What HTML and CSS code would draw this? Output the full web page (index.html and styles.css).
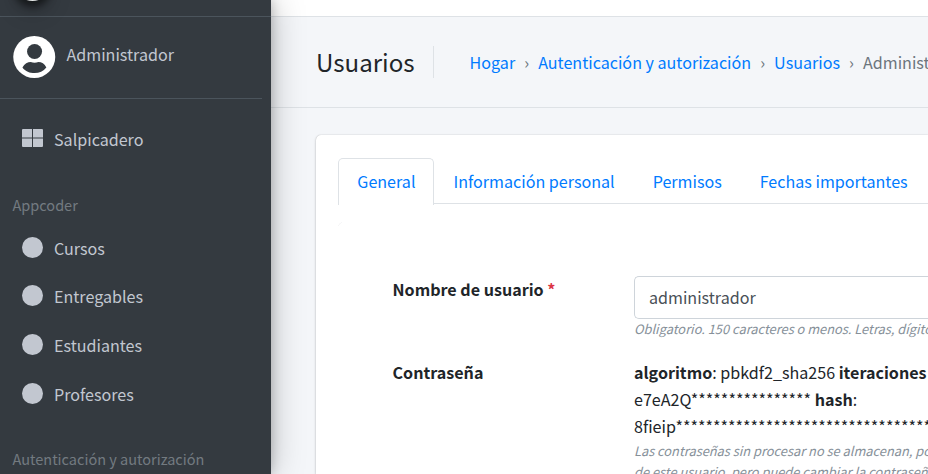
FILE: index.html
```html
<!DOCTYPE html>
<html lang="es">
<head>
<meta charset="utf-8">
<title>Usuarios</title>
<link rel="stylesheet" href="styles.css">
</head>
<body>
<div class="wrapper">
  <aside class="sidebar">
    <div class="brand"><span class="brand-logo"></span></div>
    <div class="user-panel">
      <svg class="avatar" viewBox="0 0 42 42"><circle cx="21" cy="21" r="21" fill="#fff"/><circle cx="21.3" cy="15.5" r="7.5" fill="#343a40"/><path d="M9.200 31.400c2-3.600 5.300-5.400 8.300-5.400 2.500 1 5.200 1 7.600 0 3.300 0 6.300 1.800 8 5.400-3 4-7 5.700-11.800 5.700s-9.100-1.700-12.100-5.700z" fill="#343a40"/></svg>
      <span class="nav-text">Administrador</span>
    </div>
    <nav class="menu">
      <a class="item first"><svg class="icon" viewBox="0 0 21 18"><path d="M1 0H10v8.500H0V1Q0 0 1 0zM11 0h9Q21 0 21 1V8.500H11zM0 9.500h10V18H1Q0 18 0 17zM11 9.500h10V17q0 1-1 1H11z" fill="#c2c7d0"/></svg><span class="nav-text">Salpicadero</span></a>
      <div class="header">Appcoder</div>
      <a class="item"><span class="dot"></span><span class="nav-text">Cursos</span></a>
      <a class="item"><span class="dot"></span><span class="nav-text">Entregables</span></a>
      <a class="item"><span class="dot"></span><span class="nav-text">Estudiantes</span></a>
      <a class="item"><span class="dot"></span><span class="nav-text">Profesores</span></a>
      <div class="header second">Autenticación y autorización</div>
    </nav>
  </aside>
  <main class="content">
    <div class="navbar"></div>
    <header class="page-header">
      <h1>Usuarios</h1>
      <div class="crumbs"><a>Hogar</a><i>›</i><a>Autenticación y autorización</a><i>›</i><a>Usuarios</a><i>›</i><span>Administrador</span></div>
    </header>
    <section class="card">
      <div class="tabs"><a class="tab active">General</a><a class="tab">Información personal</a><a class="tab">Permisos</a><a class="tab">Fechas importantes</a></div>
      <div class="panel">
        <div class="row user-row">
          <div class="label">Nombre de usuario <span class="required">*</span></div>
          <div class="field">
            <div class="input">administrador</div>
            <div class="help">Obligatorio. 150 caracteres o menos. Letras, dígitos</div>
          </div>
        </div>
        <div class="row">
          <div class="label">Contraseña</div>
          <div class="field">
            <div class="hash"><b>algoritmo</b>: pbkdf2_sha256 <b>iteraciones</b><br>e7eA2Q**************** <b>hash</b>:<br>8fieip**********************************</div>
            <div class="help">Las contraseñas sin procesar no se almacenan, por<br>de este usuario, pero puede cambiar la contraseña</div>
          </div>
        </div>
      </div>
    </section>
  </main>
</div>
</body>
</html>
```
FILE: styles.css
```css
* { box-sizing: border-box; }
body {
  margin: 0;
  width: 928px;
  height: 474px;
  overflow: hidden;
  background: #f4f6f9;
  color: #212529;
  font: 16.1px/27px "Noto Sans CJK SC", "Open Sans", sans-serif;
  white-space: nowrap;
}
.wrapper { display: flex; height: 474px; overflow: hidden; }
.sidebar {
  position: relative;
  z-index: 2;
  flex: 0 0 271px;
  height: 474px;
  background: #343a40;
  color: #c2c7d0;
  box-shadow: 0 0 32px rgba(0,0,0,.25), 0 0 11px rgba(0,0,0,.22);
}
.brand { display: flow-root; height: 17px; border-bottom: 1px solid #4b545c; }
.brand-logo {
  display: block;
  width: 37px;
  height: 37px;
  margin: -36px 0 0 14px;
  border-radius: 50%;
  background: #e5e7e8;
  box-shadow: 0 11px 22px rgba(0,0,0,.19), 0 6px 7px rgba(0,0,0,.5);
}
.user-panel {
  display: flex;
  align-items: flex-start;
  gap: 11px;
  height: 82px;
  margin-right: 9px;
  padding: 19px 0 0 13px;
  border-bottom: 1px solid #4b545c;
}
.avatar { width: 42.5px; height: 42px; }
.user-panel .nav-text { margin-top: 5px; }
.item { display: flex; align-items: center; height: 48.7px; padding-left: 22px; gap: 11px; }
.first { margin-top: 16px; }
.icon { width: 21px; height: 18px; margin-top: -2px; }
.dot { width: 21px; height: 21px; margin-top: -2px; border-radius: 50%; background: #c2c7d0; }
.header { height: 42px; margin-top: 18px; padding: 9px 0 0 12.5px; font-size: 14.5px; line-height: 27px; color: #737a80; }
.header.second { margin-top: 16px; padding-top: 11px; }
.content { flex: 1; min-width: 0; }
.navbar { height: 17px; background: #fff; border-bottom: 1px solid #dee2e6; }
.page-header { display: flex; height: 91px; padding: 29px 0 0 45px; border-bottom: 1px solid #dee2e6; overflow: hidden; }
h1 { margin: 0; flex: 0 0 118px; height: 32px; border-right: 1px solid #dee2e6; font-size: 24.1px; line-height: 32px; font-weight: 400; }
.crumbs { display: flex; padding: 3px 0 0 35.6px; color: #6c757d; }
a { color: #007bff; }
.sidebar a { color: inherit; }
.crumbs i { width: 23px; text-align: center; font-style: normal; }
.card { height: 339px; margin: 27px 0 0 45px; padding: 23px 0 0 22px; border-radius: 5px 0 0 0; background: #fff; box-shadow: 0 0 1px rgba(0,0,0,.25), 0 1px 3px rgba(0,0,0,.2); }
.tabs { display: flex; height: 46px; border-bottom: 1px solid #dee2e6; }
.tab { height: 46px; padding: 9px 18px 0; border: 1px solid transparent; border-bottom: 0; }
.active { height: 47px; padding-left: 18.3px; border-color: #dee2e6; border-radius: 5px 5px 0 0; background: #fff; }
.panel { height: 252px; margin-top: 18px; padding: 54px 0 0 54.5px; overflow: hidden; background: radial-gradient(circle at 5px 5px, transparent 4px, #f1f1f3 4.5px, transparent 5.2px) 0 0 / 4px 4px no-repeat; }
.row { display: flex; }
.user-row { height: 83px; }
.label { flex: 0 0 241.5px; font-weight: 700; }
.label .required { color: #dc3545; }
.field { flex: 1; min-width: 0; overflow: hidden; }
.input { height: 43px; border: 1px solid #ced4da; border-right: 0; border-radius: 5px 0 0 5px; padding: 7px 14px; color: #495057; }
.user-row .help { margin-top: -1px; }
.help { color: #869099; font-size: 12.85px; line-height: 21px; font-style: italic; }
```
